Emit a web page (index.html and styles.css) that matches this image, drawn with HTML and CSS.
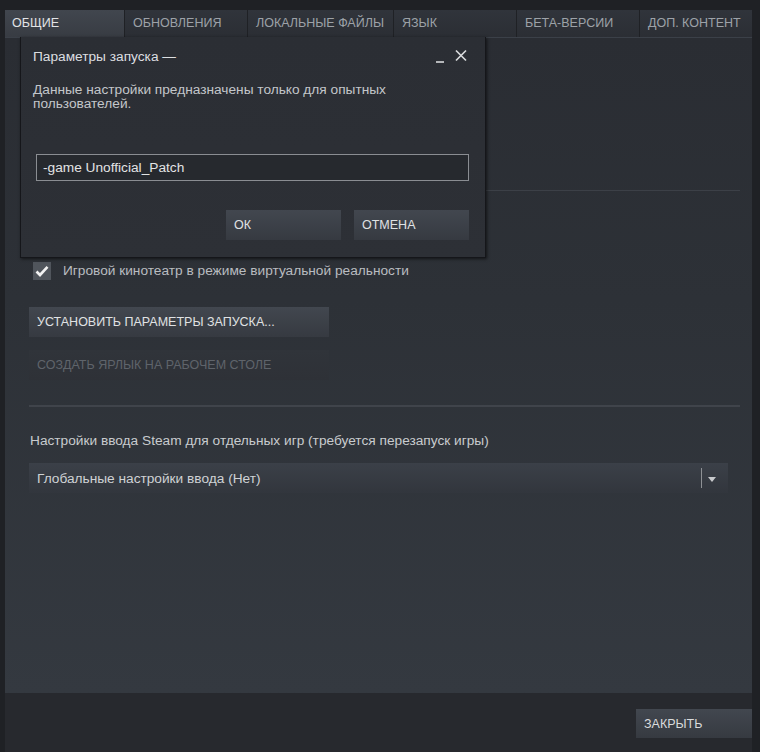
FILE: index.html
```html
<!DOCTYPE html>
<html lang="ru">
<head>
<meta charset="utf-8">
<link rel="stylesheet" href="styles.css">
</head>
<body>
<div class="window">
  <div class="tabs">
    <div class="tab active w1">ОБЩИЕ</div>
    <div class="tab w2">ОБНОВЛЕНИЯ</div>
    <div class="tab w3">ЛОКАЛЬНЫЕ ФАЙЛЫ</div>
    <div class="tab w4">ЯЗЫК</div>
    <div class="tab w5">БЕТА-ВЕРСИИ</div>
    <div class="tab w6">ДОП. КОНТЕНТ</div>
  </div>
  <div class="panel">
    <div class="divider top-div"></div>
    <label class="check-row">
      <span class="checkbox">
        <svg width="14" height="12" viewBox="0 0 14 12"><path d="M1.5 6.5 L5 10 L12.5 1.8" fill="none" stroke="#f2f2f2" stroke-width="2.6"/></svg>
      </span>
      <span class="check-label">Игровой кинотеатр в режиме виртуальной реальности</span>
    </label>
    <div class="btn wide">УСТАНОВИТЬ ПАРАМЕТРЫ ЗАПУСКА...</div>
    <div class="btn wide disabled">СОЗДАТЬ ЯРЛЫК НА РАБОЧЕМ СТОЛЕ</div>
    <div class="divider mid-div"></div>
    <div class="input-label">Настройки ввода Steam для отдельных игр (требуется перезапуск игры)</div>
    <div class="dropdown">
      <span class="dd-text">Глобальные настройки ввода (Нет)</span>
      <span class="dd-sep"></span>
      <span class="dd-arrow"></span>
    </div>
  </div>
  <div class="footer">
    <div class="btn close">ЗАКРЫТЬ</div>
  </div>

  <div class="dialog">
    <div class="dlg-head">
      <span class="dlg-title">Параметры запуска —</span>
      <span class="dlg-ctrls">
        <svg width="34" height="14" viewBox="0 0 34 14"><path d="M1 13 H9" stroke="#d8dadc" stroke-width="1.6"/><path d="M21 1.5 L31 11.5 M31 1.5 L21 11.5" stroke="#d8dadc" stroke-width="1.7"/></svg>
      </span>
    </div>
    <div class="dlg-text">Данные настройки предназначены только для опытных пользователей.</div>
    <div class="dlg-input">-game Unofficial_Patch</div>
    <div class="dlg-buttons">
      <div class="btn dlg-btn">ОК</div>
      <div class="btn dlg-btn">ОТМЕНА</div>
    </div>
  </div>
</div>
</body>
</html>
```

FILE: styles.css
```css
html, body {
  margin: 0;
  padding: 0;
}
body {
  background: #1f2125;
  font-family: "Liberation Sans", Arial, sans-serif;
  color: #c3c6ca;
  width: 760px;
  height: 752px;
  overflow: hidden;
}
.window {
  position: relative;
  padding: 10px 8px 0 5px;
  height: 742px;
}
.tabs {
  display: flex;
  gap: 1px;
  height: 27px;
}
.tab {
  background: linear-gradient(#30343b, #2b2e34);
  color: #9da2a8;
  font-size: 12.5px;
  line-height: 27px;
  padding-left: 8px;
  box-sizing: border-box;
  white-space: nowrap;
}
.tab.active {
  background: linear-gradient(#41464e, #383c43);
  color: #e2e4e6;
  padding-left: 7px;
}
.w1 { width: 119px; }
.w2 { width: 122px; }
.w3 { width: 145px; }
.w4 { width: 122px; }
.w5 { width: 122px; }
.w6 { width: 112px; }

.panel {
  height: 656px;
  box-sizing: border-box;
  background: linear-gradient(#2a2d33, #2d3137 40%, #343940);
  border-top: 1px solid #3b4048;
  padding: 152px 12px 0 24px;
}
.divider {
  height: 1px;
  background: #3c4047;
}
.mid-div {
  height: 2px;
  background: #40444b;
  margin-top: 25px;
}
.check-row {
  display: flex;
  align-items: center;
  margin-top: 71px;
  margin-left: 4px;
  height: 18px;
}
.checkbox {
  width: 18px;
  height: 18px;
  background: #50555c;
  display: flex;
  align-items: center;
  justify-content: center;
}
.check-label {
  margin-left: 12px;
  font-size: 13.7px;
  line-height: 16px;
  color: #b9bcc0;
}
.btn {
  box-sizing: border-box;
  background: linear-gradient(#42474f, #363a41);
  color: #e0e2e4;
  font-size: 12.5px;
  padding-left: 8px;
  display: flex;
  align-items: center;
  white-space: nowrap;
}
.wide {
  width: 300px;
  height: 30px;
}
.check-row + .btn {
  margin-top: 27px;
}
.wide.disabled {
  margin-top: 13px;
  background: linear-gradient(#30343a, #2e3137);
  color: #5f646b;
}
.input-label {
  margin-top: 26px;
  font-size: 13.7px;
  color: #c8cbce;
  padding-left: 1px;
  line-height: 16px;
}
.dropdown {
  margin-top: 14px;
  width: 699px;
  height: 30px;
  background: linear-gradient(#3b4048, #32363d);
  display: flex;
  align-items: center;
  font-size: 13.7px;
  color: #cfd2d5;
}
.dd-text {
  flex: 1;
  padding-left: 8px;
}
.dd-sep {
  width: 1px;
  height: 20px;
  background: #8e9195;
}
.dd-arrow {
  width: 0;
  height: 0;
  border-left: 4px solid transparent;
  border-right: 4px solid transparent;
  border-top: 5px solid #c8cacd;
  margin: 2px 12px 0 6px;
}

.footer {
  height: 59px;
  background: #27292e;
  display: flex;
  justify-content: flex-end;
  align-items: flex-start;
  padding-top: 16px;
  box-sizing: border-box;
}
.close {
  width: 116px;
  height: 29px;
  color: #d9dbdd;
}

.dialog {
  position: absolute;
  left: 20px;
  top: 37px;
  width: 466px;
  height: 221px;
  box-sizing: border-box;
  background: linear-gradient(#2b2e34, #2d3036);
  border: 1px solid #15161a;
  border-top: none;
  box-shadow: 1px 1px 3px rgba(0,0,0,0.6);
  padding: 0 16px 0 12px;
}
.dlg-head {
  display: flex;
  justify-content: space-between;
  align-items: center;
  height: 38px;
}
.dlg-title {
  font-size: 13.7px;
  color: #dcdee0;
}
.dlg-ctrls {
  display: flex;
}
.dlg-text {
  margin-top: 8px;
  font-size: 13.7px;
  line-height: 14px;
  color: #c3c6ca;
  width: 400px;
}
.dlg-input {
  margin-top: 43px;
  margin-left: 3px;
  height: 27px;
  box-sizing: border-box;
  border: 1px solid #8a8d92;
  background: #26292e;
  font-size: 13.7px;
  color: #e2e3e4;
  padding-left: 6px;
  line-height: 25px;
}
.dlg-buttons {
  display: flex;
  justify-content: flex-end;
  gap: 13px;
  margin-top: 29px;
}
.dlg-btn {
  width: 115px;
  height: 30px;
}
```
